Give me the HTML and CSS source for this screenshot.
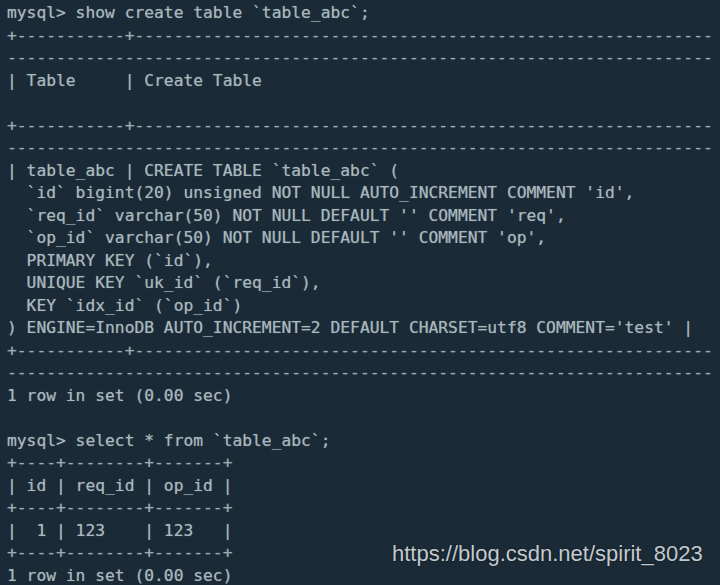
FILE: index.html
```html
<!DOCTYPE html>
<html>
<head>
<meta charset="utf-8">
<link rel="stylesheet" href="styles.css">
</head>
<body>
<div class="term">
<pre class="out">mysql&gt; show create table `table_abc`;
<span class="bd">+-----------+-----------------------------------------------------------</span>
<span class="bd">------------------------------------------------------------------------</span>
| Table     | Create Table

<span class="bd">+-----------+-----------------------------------------------------------</span>
<span class="bd">------------------------------------------------------------------------</span>
| table_abc | CREATE TABLE `table_abc` (
  `id` bigint(20) unsigned NOT NULL AUTO_INCREMENT COMMENT 'id',
  `req_id` varchar(50) NOT NULL DEFAULT '' COMMENT 'req',
  `op_id` varchar(50) NOT NULL DEFAULT '' COMMENT 'op',
  PRIMARY KEY (`id`),
  UNIQUE KEY `uk_id` (`req_id`),
  KEY `idx_id` (`op_id`)
) ENGINE=InnoDB AUTO_INCREMENT=2 DEFAULT CHARSET=utf8 COMMENT='test' |
<span class="bd">+-----------+-----------------------------------------------------------</span>
<span class="bd">------------------------------------------------------------------------</span>
1 row in set (0.00 sec)

mysql&gt; select * from `table_abc`;
<span class="bd">+----+--------+-------+</span>
| id | req_id | op_id |
<span class="bd">+----+--------+-------+</span>
|  1 | 123    | 123   |
<span class="bd">+----+--------+-------+</span>
1 row in set (0.00 sec)</pre>
<div class="mark">https://blog.csdn.net/spirit_8023</div>
</div>
</body>
</html>
```
FILE: styles.css
```css
html, body {
  margin: 0;
  padding: 0;
  background: #1a2b37;
  width: 720px;
  height: 585px;
  overflow: hidden;
}
.term {
  position: relative;
  width: 720px;
  height: 585px;
  overflow: hidden;
  background: #1a2b37;
}
.out {
  margin: 0;
  padding: 2px 0 0 7px;
  font-family: "DejaVu Sans Mono", monospace;
  font-size: 16.3px;
  line-height: 22.5px;
  color: #a9b8bd;
  text-shadow: 0 0 1px rgba(169, 184, 189, 0.6);
  white-space: pre;
}
.bd {
  color: #9aabb1;
}
.mark {
  position: absolute;
  left: 392px;
  top: 541px;
  font-family: "Liberation Sans", Arial, sans-serif;
  font-size: 22px;
  line-height: 25px;
  color: #c3cacf;
  text-shadow: 0 0 2px rgba(0, 0, 0, 0.6);
  white-space: nowrap;
}
```
